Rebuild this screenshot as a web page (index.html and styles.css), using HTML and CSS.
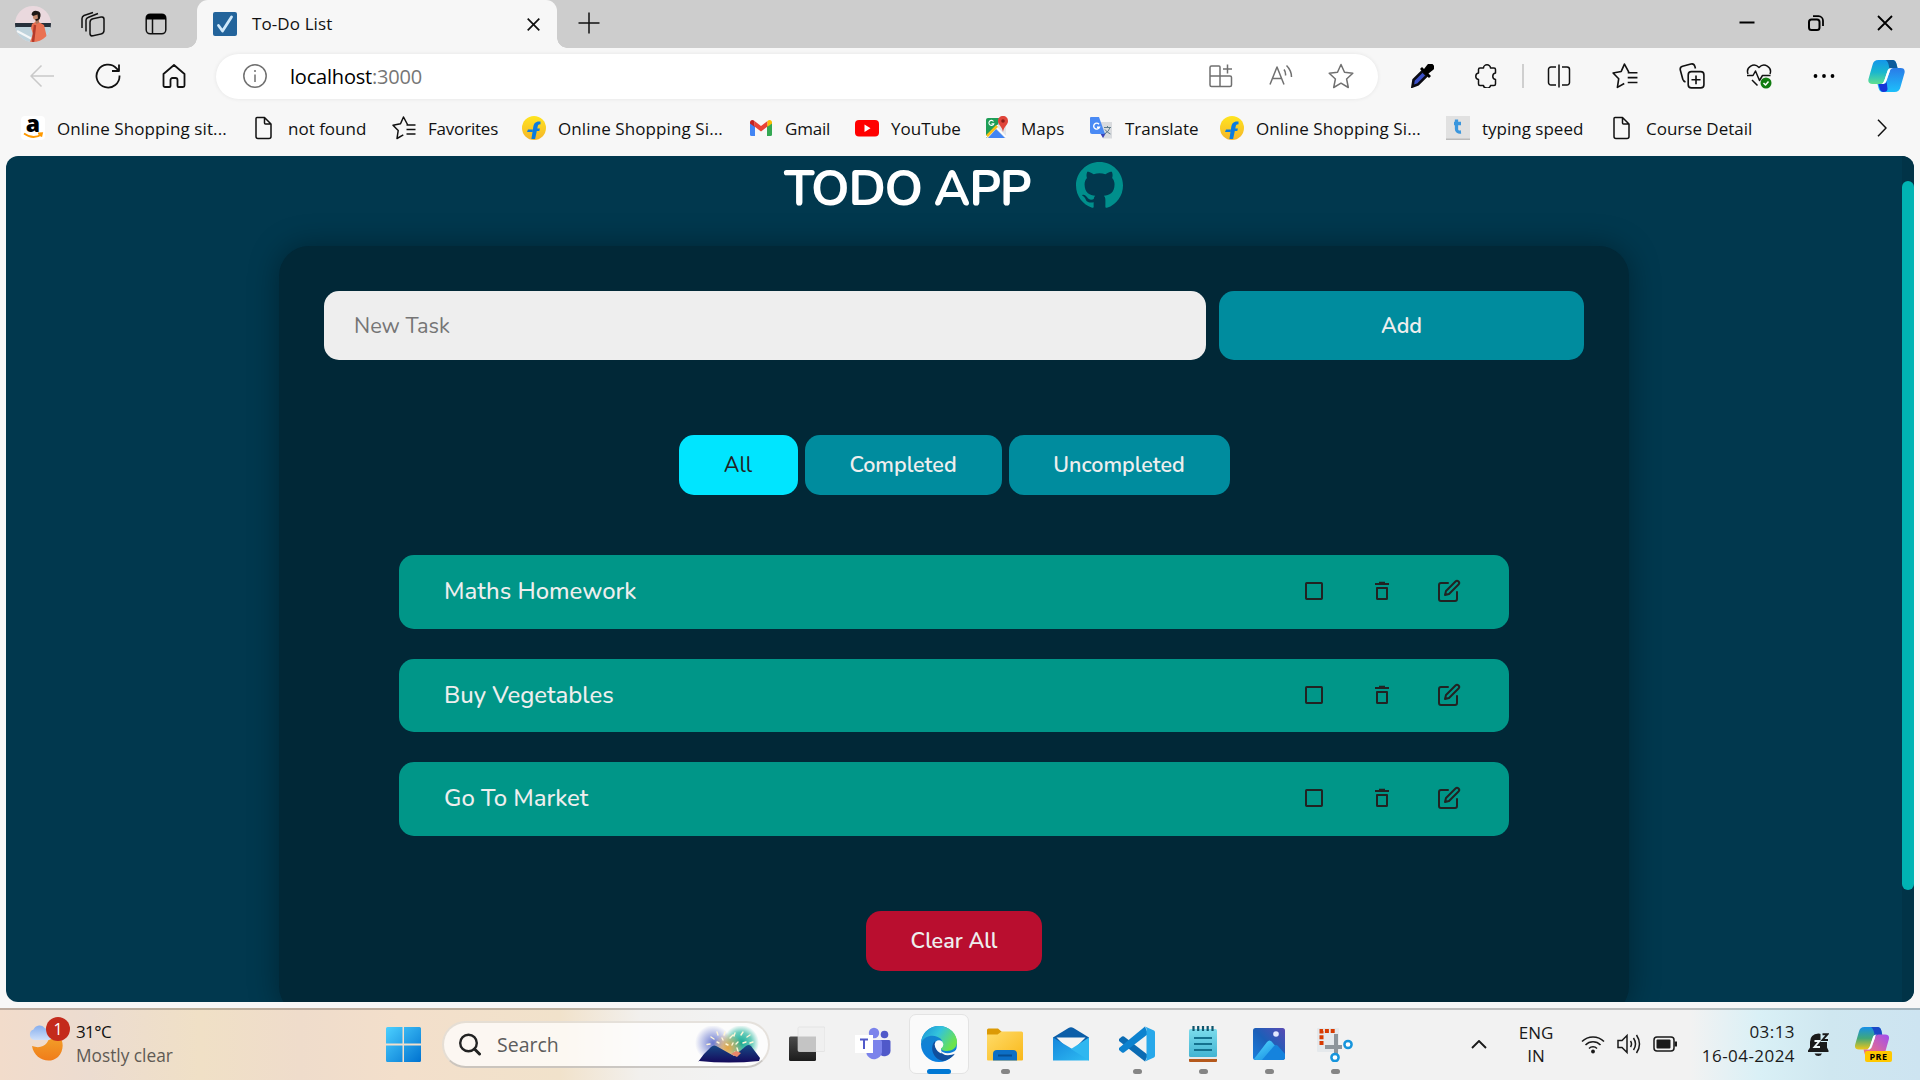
FILE: index.html
```html
<!DOCTYPE html>
<html lang="en">
<head>
<meta charset="utf-8">
<title>To-Do List</title>
<link rel="stylesheet" href="styles.css">
</head>
<body>
<svg class="defs" width="0" height="0" aria-hidden="true">
  <defs>
    <linearGradient id="flame" x1="0" y1="0" x2="0" y2="1"><stop offset="0" stop-color="#ffe51f"/><stop offset="1" stop-color="#f5b52a"/></linearGradient>
    <linearGradient id="moon" x1="0" y1="0" x2="0" y2="1"><stop offset="0" stop-color="#f3a72c"/><stop offset="1" stop-color="#f07c1a"/></linearGradient>
    <linearGradient id="cloud" x1="0" y1="0" x2="0" y2="1"><stop offset="0" stop-color="#86aeee"/><stop offset="1" stop-color="#cfe0fa"/></linearGradient>
    <linearGradient id="win" x1="0" y1="0" x2="1" y2="1"><stop offset="0" stop-color="#4cd0ff"/><stop offset="1" stop-color="#0072d0"/></linearGradient>
    <linearGradient id="cpL" x1="0" y1="0" x2="0" y2="1"><stop offset="0" stop-color="#1496ea"/><stop offset=".5" stop-color="#19b6cf"/><stop offset="1" stop-color="#5fe08f"/></linearGradient>
    <linearGradient id="cpR" x1="0" y1="0" x2="0" y2="1"><stop offset="0" stop-color="#2a7be8"/><stop offset="1" stop-color="#1cc0fb"/></linearGradient>
    <linearGradient id="preL" x1="0" y1="0" x2="0" y2="1"><stop offset="0" stop-color="#168fe8"/><stop offset=".5" stop-color="#41a87a"/><stop offset="1" stop-color="#f0c619"/></linearGradient>
    <linearGradient id="preR" x1="1" y1="0" x2="0" y2="1"><stop offset="0" stop-color="#a04cf0"/><stop offset="1" stop-color="#ff7a68"/></linearGradient>
    <linearGradient id="edgeTop" x1="0" y1="0" x2="1" y2=".5"><stop offset="0" stop-color="#168fd8"/><stop offset=".5" stop-color="#33c3dc"/><stop offset="1" stop-color="#6be34c"/></linearGradient>
    <linearGradient id="edgeLeft" x1="0" y1="0" x2="0" y2="1"><stop offset="0" stop-color="#1784c9"/><stop offset="1" stop-color="#0a7fe0"/></linearGradient>
    <linearGradient id="folder" x1="0" y1="0" x2="1" y2="1"><stop offset="0" stop-color="#ffdc6a"/><stop offset="1" stop-color="#f9b81a"/></linearGradient>
    <linearGradient id="mail" x1="0" y1="0" x2="1" y2="1"><stop offset="0" stop-color="#1586dc"/><stop offset="1" stop-color="#2ebcf2"/></linearGradient>
    <linearGradient id="note" x1="0" y1="0" x2="0" y2="1"><stop offset="0" stop-color="#7bdcec"/><stop offset="1" stop-color="#43b4d2"/></linearGradient>
    <linearGradient id="photo" x1="0" y1="1" x2="1" y2="0"><stop offset="0" stop-color="#1a7fdc"/><stop offset=".5" stop-color="#1b5fb8"/><stop offset="1" stop-color="#5a4bb4"/></linearGradient>
    <linearGradient id="hill" x1="0" y1="0" x2="1" y2="1"><stop offset="0" stop-color="#55dcff"/><stop offset="1" stop-color="#0c7ddc"/></linearGradient>
    <linearGradient id="dark" x1="0" y1="0" x2="0" y2="1"><stop offset="0" stop-color="#4b4b4b"/><stop offset="1" stop-color="#1c1c1c"/></linearGradient>
    <radialGradient id="glowV"><stop offset="0" stop-color="#6a79cf"/><stop offset="1" stop-color="#6a79cf" stop-opacity="0"/></radialGradient>
    <radialGradient id="glowG"><stop offset="0" stop-color="#12a894"/><stop offset=".6" stop-color="#2bb8a0" stop-opacity=".7"/><stop offset="1" stop-color="#2bb8a0" stop-opacity="0"/></radialGradient>
    <radialGradient id="glowO"><stop offset="0" stop-color="#e5a544"/><stop offset="1" stop-color="#e5a544" stop-opacity="0"/></radialGradient>
    <linearGradient id="mount" x1="0" y1="0" x2="0" y2="1"><stop offset="0" stop-color="#174a86"/><stop offset="1" stop-color="#150a5c"/></linearGradient>
    <clipPath id="round"><circle cx="18" cy="18" r="18"/></clipPath>
    <symbol id="page" viewBox="0 0 24 24"><path d="M5 1.500h7.500l6.500 6.500V20.500a2 2 0 0 1-2 2H6a2 2 0 0 1-2-2V2.500a1 1 0 0 1 1-1zM12.500 1.500V7a1 1 0 0 0 1 1H19"/></symbol>
    <symbol id="favlist" viewBox="0 0 24 24"><path d="M15.500 8.500 11.500 1 8.500 7.800 1 9.200l5.200 5.300L5 22.500l6.300-3.600M14.500 9h9M14.500 13.500h9M14.500 18h9"/></symbol>
    <symbol id="flipkart" viewBox="0 0 24 24"><circle cx="12" cy="12" r="12" fill="url(#flame)"/><path d="M18.500 5.500c-5-.6-6.600 2-7.200 5.200L9.400 23h3.700l1.700-8h2.500l.6-2.600h-2.600l.4-2c.2-1.400 1.200-2.200 2.800-2zM6 13.500h5l-.4 2.400H5z" fill="#0a7be0"/></symbol>
    <symbol id="box" viewBox="0 0 24 24"><rect x="4" y="4" width="16" height="16" rx=".7"/></symbol>
    <symbol id="trash" viewBox="0 0 24 24"><path d="M5 5h14M9 3.800h6M7 9h10v10.500a.5.5 0 0 1-.5.500h-9a.5.5 0 0 1-.5-.500z"/></symbol>
    <symbol id="edit" viewBox="0 0 24 24"><path d="M11 4H4a2 2 0 0 0-2 2v14a2 2 0 0 0 2 2h14a2 2 0 0 0 2-2v-7M18.500 2.500a2.121 2.121 0 0 1 3 3L12 15l-4 1 1-4z"/></symbol>
  </defs>
</svg>

<header class="tabstrip">
  <div class="strip-left">
    <svg class="avatar" viewBox="0 0 36 36"><g clip-path="url(#round)"><path fill="#ead9de" d="M0 0h36v36H0z"/><path fill="#27313c" d="M0 17h36v5H0z"/><path fill="#bfd3dc" d="M0 21h36v15H0z"/><path d="M2 25l15 8" stroke="#f4f7f8" stroke-width="2"/><path fill="#ea7253" d="M17 18l5-3 7 4 4 17H15l3-8-2-6z"/><path d="M20 19l-2 17" stroke="#b43b2b" stroke-width="2.500"/><path d="M20 13h4v4l-3 1z" fill="#a9745b"/><circle cx="21.500" cy="10.500" r="3.600" fill="#c38a6e"/><path fill="#1c1714" d="M16.500 8.500q1-4.500 5.500-3.500 4 .500 3.500 5l-.8 3-3 2-1.700-1.500 3-1-.5-4-4.500 1.500z"/></g></svg>
    <svg class="ico i26" viewBox="0 0 26 26"><rect x="10" y="7.500" width="14" height="17" rx="3" transform="skewY(-12) translate(0 3)"/><path d="M6 20.500V9a3 3 0 0 1 2-2.500L18 2.500M2 17V7.500A3.500 3.500 0 0 1 4 4.500L13 1.500"/></svg>
    <svg class="ico i22" viewBox="0 0 22 22"><rect x="1.200" y="1.200" width="19.600" height="19.600" rx="4"/><path fill="#000" stroke="none" d="M1 6.500V4.500A4 4 0 0 1 5 1h12a4 4 0 0 1 4 3.500v2z"/><path d="M7.500 6v14"/></svg>
  </div>
  <div class="tab">
    <svg class="favicon" viewBox="0 0 24 24"><rect width="24" height="24" rx="2" fill="#23649b"/><path d="M5.500 13.500l4 5.500L18.500 5" fill="none" stroke="#cfe9fb" stroke-width="2.800" stroke-linecap="round" stroke-linejoin="round"/></svg>
    <span class="tab-title">To-Do List</span>
    <svg class="ico tab-close" viewBox="0 0 13 13"><path d="M.7.700l11.600 11.600M12.300.7.700 12.300"/></svg>
  </div>
  <svg class="ico plus" viewBox="0 0 22 22"><path d="M11 .5v21M.5 11h21"/></svg>
  <div class="controls">
    <svg class="ico" viewBox="0 0 16 16"><path stroke-width="2" d="M.5 7.500h15"/></svg>
    <svg class="ico" viewBox="0 0 16 16"><rect x="1" y="4.500" width="10.500" height="10.500" rx="2.500" stroke-width="2"/><path d="M5 1.200h5.500a4.500 4.500 0 0 1 4.500 4.500V11" stroke-width="1.800"/></svg>
    <svg class="ico" viewBox="0 0 16 16"><path stroke-width="1.800" d="M1 1l14 14M15 1 1 15"/></svg>
  </div>
</header>

<nav class="toolbar">
  <div class="nav-icons">
    <svg class="ico i24 disabled" viewBox="0 0 24 24"><path d="M24 12H1M11.500 1.500 1 12l10.500 10.500"/></svg>
    <svg class="ico i26 strong" viewBox="0 0 26 26"><path d="M24.500 12.500A11.500 11.500 0 1 1 21.500 5.300L24 8M24 1.500V8h-7"/></svg>
    <svg class="ico i24 strong" viewBox="0 0 24 24"><path d="M1.500 10 12 1l10.500 9v11.500a1.500 1.500 0 0 1-1.500 1.500h-4.500a1 1 0 0 1-1-1V16a2 2 0 0 0-2-2h-3a2 2 0 0 0-2 2v6a1 1 0 0 1-1 1H3a1.500 1.500 0 0 1-1.500-1.500z"/></svg>
  </div>
  <div class="address">
    <svg class="ico i24 muted" viewBox="0 0 24 24"><circle cx="12" cy="12" r="11.200"/><path d="M12 10.500v7.500M12 6v2"/></svg>
    <span class="url">localhost<span class="port">:3000</span></span>
    <div class="address-icons">
      <svg class="ico i24 muted" viewBox="0 0 24 24"><path d="M2.500 2H10a1 1 0 0 1 1 1v19.500H2.500a1.500 1.500 0 0 1-1.500-1.500V3.500A1.500 1.500 0 0 1 2.500 2zM1 12h20a1.500 1.500 0 0 1 1.500 1.500V21a1.500 1.500 0 0 1-1.500 1.500H11M18.500.5v9M14 5h9"/></svg>
      <svg class="ico i24 muted" viewBox="0 0 24 24"><path d="M1 20.500 8 3l7 17.500M3.500 14.500h9M15 5.500a8 8 0 0 1 1.500 6M17.500 1.500q5 5 5 11.500"/></svg>
      <svg class="ico i26 muted" viewBox="0 0 26 26"><path d="M13 1.500l3.500 7.800 8.300 1-6.200 5.700 1.700 8.500-7.300-4.300-7.300 4.300 1.700-8.500L1.200 10.300l8.300-1z"/></svg>
    </div>
  </div>
  <div class="tools">
    <svg class="i24" viewBox="0 0 24 24"><path d="M3.500 16 12.500 7l4.500 4.500L8 20.500l-5.500 2z" fill="#3b50c8" stroke="#0b0b12" stroke-width="2.600"/><path d="M10 5l9 9 2-2-2.500-2.500L23 6a3.800 3.800 0 0 0-5.500-5.500L14 5l-2-2z"/></svg>
    <svg class="ico i24" viewBox="0 0 24 24"><path d="M3.500 5.500A1.500 1.500 0 0 1 5 4h3.500a3.500 3.200 0 0 1 7 0H19a1.500 1.500 0 0 1 1.500 1.500V9a3.300 3.300 0 0 0 0 6.500V20a1.500 1.500 0 0 1-1.500 1.500h-3.500a3.500 2.500 0 0 1-7 0H5A1.500 1.500 0 0 1 3.500 20v-4.500a3.300 3.300 0 0 1 0-6.500z"/></svg>
    <i class="divider"></i>
    <svg class="ico i24" viewBox="0 0 24 24"><path d="M9 3H4a2.500 2.500 0 0 0-2.500 2.500v13A2.500 2.500 0 0 0 4 21h5M15 3h5a2.500 2.500 0 0 1 2.500 2.500v13A2.500 2.500 0 0 1 20 21h-5M12 .5v23"/></svg>
    <svg class="ico i26"><use href="#favlist"/></svg>
    <svg class="ico i26" viewBox="0 0 24 24"><rect x="8.500" y="8" width="14.500" height="15" rx="3"/><path d="M15.700 11.500v8M11.500 15.500h8.400M6 17.500c-1.500-.5-2-1-2.500-2.500L1.200 6.500C.8 4.500 1.500 3.500 3.300 3L11 1c2-.5 3 0 3.600 2l.6 2"/></svg>
    <svg class="ico i26" viewBox="0 0 26 26"><path d="M2 11C-.5 4 8-1 13 4.500 18-1 26.500 4 24 11M1 12.500h6L9.500 8l4 9.500 3-5h8M6 17l5.500 5.500"/><circle cx="20" cy="20" r="5.500" fill="#107c10" stroke="none"/><path d="M17.500 20l2 2 3-3.500" stroke="#fff"/></svg>
    <svg class="i22" viewBox="0 0 22 22"><circle cx="2.500" cy="11" r="1.900"/><circle cx="11" cy="11" r="1.900"/><circle cx="19.500" cy="11" r="1.900"/></svg>
    <svg class="copilot" viewBox="0 0 36 32"><path d="M10 0h14q3 0 4 4l1 4h-6q-3 0-4 3l-3 9q-1 4-4 4H4q-5 0-4-5L4 5q1-5 6-5z" fill="url(#cpL)"/><path d="M17 0h7q3 0 4 4l1 4h-6l-2 1q-1-8-4-9z" fill="#0d5c9c"/><path d="M26 32H14q-3 0-4-4l-1-4h5q3 0 4-3l3-9q1-4 4-4h7q5 0 4 5l-4 14q-1 5-6 5z" fill="url(#cpR)"/><path d="M10 24h5q3 0 3-3l1 8q0 3-4 3-3 0-4-4z" fill="#1634d8"/><path d="M19 11q1-3 4-3-2 1-2 4l-4 10q-1 2-4 2 2-1 3-4z" fill="#fff"/></svg>
  </div>
</nav>

<nav class="bookmarks">
  <a><svg class="amazon" viewBox="0 0 24 24"><rect width="24" height="24" rx="4" fill="#fff"/><text class="glyph" x="12" y="15.500" font-size="23">a</text><path d="M3 17.500q9 6.500 17.500 1M17 17.500l4-.300-.8 3.500" fill="none" stroke="#f90" stroke-width="1.800"/></svg>Online Shopping sit...</a>
  <a><svg class="ico"><use href="#page"/></svg>not found</a>
  <a><svg class="ico"><use href="#favlist"/></svg>Favorites</a>
  <a><svg><use href="#flipkart"/></svg>Online Shopping Si...</a>
  <a><svg viewBox="0 0 24 24"><path fill="#4285f4" d="M1 6l5 4v10H2.500A1.500 1.500 0 0 1 1 18.500z"/><path fill="#34a853" d="M23 6l-5 4v10h3.500a1.500 1.500 0 0 0 1.500-1.500z"/><path fill="#ea4335" d="M5.500 5l6.500 5 6.500-5v5.500L12 15.500l-6.500-5z"/><path fill="#c5221f" d="M1 6.500C1 4 3.500 3.200 5.500 5v5.800L1 7.500z"/><path fill="#fbbc04" d="M23 6.500c0-2.500-2.500-3.300-4.500-1.500v5.800L23 7.500z"/></svg>Gmail</a>
  <a><svg viewBox="0 0 24 24"><rect y="4" width="24" height="16.500" rx="4" fill="#f00"/><path d="M9.500 8.500v7.500l6-3.700z" fill="#fff"/></svg>YouTube</a>
  <a><svg viewBox="0 0 24 24"><path fill="#e4e6e8" d="M1 3h20v19H1z"/><path fill="#1e9e57" d="M3 2h11l-1 8L1 22V4a2 2 0 0 1 2-2z"/><path fill="#4285f4" d="M11 13l9 9H3z"/><path d="M1 21 13 9M11 11l10 10" stroke="#fff" stroke-width="1.600"/><path d="M2 20 12 10" stroke="#fbc116" stroke-width="2.500"/><path fill="#e0453a" d="M18 0c3 0 5 2 5 5 0 4-4 5-5 11-1-6-5-7-5-11 0-3 2-5 5-5z"/><circle cx="18" cy="5" r="1.800" fill="#8c1d18"/><path d="M8.500 5.500a2.500 2.500 0 1 0 .3 2.200H6.500" fill="none" stroke="#fff" stroke-width="1.100"/></svg>Maps</a>
  <a><svg viewBox="0 0 24 24"><path fill="#d9dbde" d="M9 6h14v16.500H14z"/><path fill="#3c44b8" d="M11 17h6l-3 5z"/><path fill="#4a8af4" d="M2 1h8l6 17H3a2 2 0 0 1-2-2V2a1 1 0 0 1 1-1z"/><path d="M10 8.200a3 3 0 1 0 .5 3H8" fill="none" stroke="#fff" stroke-width="1.400"/><path d="M15 11.500h7M18.500 10v1.500M21 11.500q-1 4-5.500 6.500M16 13.500q2 3 5.500 4.500" fill="none" stroke="#607d8b"/></svg>Translate</a>
  <a><svg><use href="#flipkart"/></svg>Online Shopping Si...</a>
  <a><svg viewBox="0 0 24 24"><path fill="#e1e1e1" d="M0 0h24v24H0z"/><path fill="#bbb" d="M0 22.500h24V24H0z"/><path d="M10.500 3.500V13q0 3.500 4.500 3M8 7.500h7" fill="none" stroke="#3a96dd" stroke-width="3.300"/></svg>typing speed</a>
  <a><svg class="ico"><use href="#page"/></svg>Course Detail</a>
  <svg class="ico more" viewBox="0 0 10 18"><path d="M1 .8 9 9l-8 8.200"/></svg>
</nav>

<div class="viewport">
  <main class="page">
    <div class="heading">
      <h1>TODO APP</h1>
      <svg class="github" viewBox="0 0 16 16"><path d="M8 0C3.580 0 0 3.580 0 8c0 3.540 2.290 6.530 5.470 7.590.4.070.550-.170.550-.380 0-.190-.010-.820-.010-1.490-2.010.370-2.530-.490-2.690-.940-.090-.230-.480-.940-.820-1.130-.280-.150-.680-.520-.010-.530.630-.010 1.080.580 1.230.820.720 1.210 1.870.870 2.330.660.070-.520.280-.870.510-1.070-1.780-.200-3.640-.890-3.640-3.950 0-.870.310-1.590.820-2.150-.080-.200-.360-1.020.080-2.120 0 0 .670-.210 2.200.820.640-.180 1.320-.270 2-.270s1.360.090 2 .270c1.530-1.040 2.200-.820 2.200-.820.440 1.100.160 1.920.080 2.120.510.560.820 1.270.820 2.150 0 3.070-1.870 3.750-3.650 3.950.290.250.540.730.540 1.480 0 1.070-.010 1.930-.010 2.200 0 .210.150.460.550.380A8.010 8.010 0 0 0 16 8c0-4.420-3.580-8-8-8z"/></svg>
    </div>
    <section class="app">
      <form class="new-task">
        <input type="text" placeholder="New Task">
        <button type="button">Add</button>
      </form>
      <div class="filters">
        <button class="all active">All</button>
        <button class="done">Completed</button>
        <button class="open">Uncompleted</button>
      </div>
      <ul class="tasks">
        <li><span>Maths Homework</span><svg><use href="#box"/></svg><svg><use href="#trash"/></svg><svg class="edit"><use href="#edit"/></svg></li>
        <li><span>Buy Vegetables</span><svg><use href="#box"/></svg><svg><use href="#trash"/></svg><svg class="edit"><use href="#edit"/></svg></li>
        <li><span>Go To Market</span><svg><use href="#box"/></svg><svg><use href="#trash"/></svg><svg class="edit"><use href="#edit"/></svg></li>
      </ul>
      <button class="clear">Clear All</button>
    </section>
  </main>
  <div class="scrollbar"><div class="thumb"></div></div>
</div>

<footer class="taskbar">
  <div class="weather">
    <div class="weather-icon">
      <svg viewBox="0 0 36 42"><path d="M4 27C15 31 22 24 22 13c14 1 16 17 8 25-9 8-24 2-26-11z" fill="url(#moon)"/><path d="M6 21a5.500 5.500 0 0 1-.5-10.500 6.500 6.500 0 0 1 11.500-1A6 6 0 0 1 21 21z" fill="url(#cloud)"/></svg>
      <span class="badge">1</span>
    </div>
    <div><div class="temp">31°C</div><div class="cond">Mostly clear</div></div>
  </div>
  <svg class="start" viewBox="0 0 35 35"><path fill="url(#win)" d="M1.500 0H16.500V16.500H0V1.500A1.500 1.500 0 0 1 1.500 0zM18 0h15.500A1.500 1.500 0 0 1 35 1.500v15H18zM0 18.500h16.500V35h-15A1.500 1.500 0 0 1 0 33.500zM18 18.500h17v15a1.500 1.500 0 0 1-1.500 1.500H18z"/></svg>
  <div class="search">
    <svg class="lens" viewBox="0 0 22 22"><circle cx="9.500" cy="9.500" r="8.300"/><path d="M15.500 15.500l5 5" stroke-linecap="round" stroke-width="3"/></svg>
    <span>Search</span>
    <svg class="fireworks" viewBox="0 0 66 37"><circle cx="18" cy="17" r="18" fill="url(#glowV)"/><circle cx="46" cy="17" r="18" fill="url(#glowG)"/><circle cx="33" cy="22" r="15" fill="url(#glowO)"/><g stroke="#fff6d8" stroke-width="1.400" stroke-linecap="round"><path d="M19 13l-3-2M23 9l-1-3M29 9l1-3M15 18l-3 .5M17 23l-3 1.500M35 12l3-3M39 10l1-3M46 9l2-3M52 11l3-2M55 17l3-1M54 22l3 1M43 16l-2 2M38 17l-1 2M42 22l1 3M48 17l3-1M33 19l-2-1M49 23l2 2M40 26l0 3M24 17l-2-1M28 14l-1-2"/></g><path d="M3 36q5-8 13-15 3-3 7 0l16 9 12-10q3-2 5 0l9 12-1 3q-30 3-60 0z" fill="url(#mount)"/><path d="M36 28l5-3 5 2-4 4z" fill="#e8876a"/></svg>
  </div>
  <div class="apps">
    <div class="slot"><svg viewBox="0 0 36 36"><rect y="10.500" width="27" height="24.500" rx="1.500" fill="url(#dark)"/><rect x="9" y="1" width="27" height="24.500" rx="1.500" fill="#f0f0f0" stroke="#dcdcdc" stroke-width=".6"/><path d="M9 10.500h18v15H10.500A1.500 1.500 0 0 1 9 24z" fill="#c4c4c4"/></svg></div>
    <div class="slot"><svg viewBox="0 0 36 36"><circle cx="29.500" cy="8.500" r="3.800" fill="#5059c9"/><circle cx="19" cy="7" r="5.200" fill="#7b83eb"/><path fill="#5059c9" d="M24 14h10a1.500 1.500 0 0 1 1.500 1.500v8a6 6 0 0 1-11.500 3z"/><path fill="#7b83eb" d="M12 14h13.500a1.500 1.500 0 0 1 1.500 1.500V26a8 8 0 0 1-15.500 2z"/><rect y="9" width="18" height="18" fill="#fff"/><path d="M5 13.500h8M9 13.500V23" stroke="#5059c9" stroke-width="2"/></svg></div>
    <div class="slot current"><svg viewBox="0 0 36 36"><circle cx="18" cy="18" r="18" fill="url(#edgeLeft)"/><path fill="url(#edgeTop)" d="M0 17C1 6 9 0 18 0c11 0 18 8 18 16 0 6-5 9-10 9-4 0-7-1.500-6-4 2-2 2-5 0-8C15 8 4 8 0 17z"/><path fill="#104f9d" d="M14 15c-6 6-2 18 8 20 6-1 11-5 12-8-8 4-19 0-20-12z"/><path d="M18.500 23.500c4 5 12 5 17 0L40 26 35 27.500q-13 5-16.500-4z" fill="#fafafa"/><circle cx="18" cy="18.500" r="4.300" fill="#fafafa"/><path d="M14 20c.5 3 3 6.500 6.500 7.500L20 22z" fill="#fafafa"/></svg><i></i></div>
    <div class="slot run"><svg viewBox="0 0 36 36"><path fill="#dc9a05" d="M0 4a1.500 1.500 0 0 1 1.500-1.500H11L15 6l-3 3H0z"/><path fill="url(#folder)" d="M0 8.500h10.500l4-3H34.500A1.500 1.500 0 0 1 36 7v26.500a1 1 0 0 1-1 1H1a1 1 0 0 1-1-1z"/><path fill="#0c6fc6" d="M6 34.500V28a4 4 0 0 1 4-4h16a4 4 0 0 1 4 4v6.500z"/><path d="M11 29.500h14" stroke="#064e92" stroke-width="2"/></svg><i></i></div>
    <div class="slot"><svg viewBox="0 0 36 36"><path fill="#0b5ea8" d="M0 11.500 15.500 2q2.500-1.500 5 0L36 11.500V20H0z"/><path fill="#f4f4f4" d="M3.500 11.500h29L20 24h-4z"/><path fill="url(#mail)" d="M0 11.500l36 21.500v1.500H0z"/><path fill="#2fb7f0" d="M36 11.500 18 23l18 11.500z"/></svg></div>
    <div class="slot run"><svg viewBox="0 0 36 36"><path fill="#0b6bb3" d="M0 13l3-2.500q1-.5 2 0L29 29l-3 6.500L0 15q-1-1 0-2z"/><path fill="#0d82cf" d="M0 24l3 2.500q1 .5 2 0L29 8l-3-7.500L0 22q-1 1 0 2z"/><path fill="#28a8ea" d="M26 .5l9 4q1 .5 1 2v23q0 1.500-1 2l-9 4q1.500-1 1.500-3V3.500q0-2-1.500-3z"/></svg><i></i></div>
    <div class="slot run"><svg viewBox="0 0 36 36"><path fill="#b5591c" d="M4 32h28v3a1 1 0 0 1-1 1H5a1 1 0 0 1-1-1z"/><path fill="#e8e8e8" d="M4 29h28v4H4z"/><rect x="4" y="3" width="28" height="28" rx="1.500" fill="url(#note)"/><path d="M9 12h18M9 18h18M9 24h18" stroke="#14718e" stroke-width="1.800"/><path d="M8.500 0v5M13.200 0v5M18 0v5M22.700 0v5M27.500 0v5" stroke="#0f566e" stroke-width="2.200"/></svg><i></i></div>
    <div class="slot run"><svg viewBox="0 0 36 36"><rect x="2" y="2" width="32" height="32" rx="2.500" fill="url(#photo)"/><path fill="url(#hill)" d="M3 33 16 16q2.500-3 5 0l12 14v3l-2 1H5z"/><path fill="#1583dd" d="M11 34l12-14q2-2 4 0l7 8v4.500L32 34z"/><circle cx="25" cy="8" r="2.800" fill="#e3e8ff"/></svg><i></i></div>
    <div class="slot run"><svg viewBox="0 0 36 36"><rect y="2" width="22" height="24" rx="1" fill="#e5e9ec"/><path d="M19 8v20M8 21h17" stroke="#8d959b" stroke-width="4"/><path d="M4.500 19V5H19" fill="none" stroke="#d83b01" stroke-width="4" stroke-dasharray="4 1.800"/><circle cx="31" cy="18.500" r="3.600" fill="#fff" stroke="#1795dc" stroke-width="2.500"/><circle cx="18" cy="31.500" r="3.600" fill="#fff" stroke="#1795dc" stroke-width="2.500"/></svg><i></i></div>
  </div>
  <div class="tray">
    <svg class="chev" viewBox="0 0 16 9"><path d="M1 8l7-7 7 7"/></svg>
    <div class="lang">ENG<br>IN</div>
    <svg class="status" viewBox="0 0 24 24"><path d="M1 9.500a15.500 15.500 0 0 1 22 0M4.500 13a10.500 10.500 0 0 1 15 0M8 16.500a5.700 5.700 0 0 1 8 0"/><circle cx="12" cy="19.500" r="1.900" fill="#1a1a1a" stroke="none"/></svg>
    <svg class="status" viewBox="0 0 24 24"><path d="M1 8.500h4l5-5v17l-5-5H1zM13.500 9q2 3 0 6M16.500 6q4 6 0 12M19.500 3q6 9 0 18"/></svg>
    <svg class="status" viewBox="0 0 24 24"><rect x="1" y="5" width="20" height="14" rx="3"/><rect x="3.500" y="7.500" width="14" height="9" rx="1" fill="#1a1a1a" stroke="none"/><path d="M22.800 9.500v5" stroke-width="2.400"/></svg>
    <div class="clock">03:13<br>16-04-2024</div>
    <svg class="bell" viewBox="0 0 21 23"><path fill="#1a1a1a" d="M0 17.500l2-3V9q0-8 8.500-8.500Q19 1 19 9v5.500l1.500 3V19H0zM6.500 20.500h7.500q-1 2.500-3.700 2.500t-3.800-2.500z"/><path fill="#d3edf4" d="M12.500 0H21v9h-8.500z"/><path d="M6.500 8h5l-5 6h5.500" fill="none" stroke="#eef6f8" stroke-width="1.900"/><path d="M14.500 1.200h5l-5 5.800h5.500" fill="none" stroke="#1a1a1a" stroke-width="1.900"/></svg>
    <div class="pre"><svg viewBox="0 0 36 32"><path d="M10 0h14q3 0 4 4l1 4h-6q-3 0-4 3l-3 9q-1 4-4 4H4q-5 0-4-5L4 5q1-5 6-5z" fill="url(#preL)"/><path d="M17 0h7q3 0 4 4l1 5-8 1q-1-8-4-10z" fill="#1b48c8"/><path d="M26 32H14q-3 0-4-4l-1-4h5q3 0 4-3l3-9q1-4 4-4h7q5 0 4 5l-4 14q-1 5-6 5z" fill="url(#preR)"/><path d="M19 11q1-3 4-3-2 1-2 4l-4 10q-1 2-4 2 2-1 3-4z" fill="#fff"/></svg><span>PRE</span></div>
  </div>
</footer>
</body>
</html>
```
FILE: styles.css
```css
* { box-sizing: border-box; }
body {
  margin: 0; width: 1920px; height: 1080px; overflow: hidden;
  display: flex; flex-direction: column; background: #f7f7f7; color: #111;
  font-family: "Segoe UI", "Open Sans", "Noto Sans", sans-serif; font-size: 17px;
}
svg { display: block; flex: none; }
button, input { font: inherit; border: 0; padding: 0; margin: 0; }
.defs { position: absolute; }
.ico { fill: none; stroke: #111; stroke-width: 1.5; stroke-linejoin: round; }
.i22 { width: 22px; height: 22px; }
.i24 { width: 24px; height: 24px; }
.i26 { width: 26px; height: 26px; }
.muted { stroke: #707070; }
.disabled { stroke: #c9c9c9; }
.strong { stroke-width: 1.8; }
.glyph { font-weight: 800; text-anchor: middle; fill: #000; letter-spacing: 0; }
.amazon { overflow: visible; }

/* tab strip */
.tabstrip { flex: none; height: 48px; background: #cdcdcd; display: flex; align-items: center; }
.strip-left { width: 197px; padding-left: 15px; display: flex; align-items: center; }
.avatar { width: 36px; height: 36px; }
.strip-left .i26 { margin-left: 29px; }
.strip-left .i22 { margin-left: 39px; }
.tab {
  position: relative; width: 360px; height: 48px; background: #f7f7f7; border-radius: 11px 11px 0 0;
  display: flex; align-items: center; padding: 0 17px 0 16px;
}
.tab::before, .tab::after { content: ""; position: absolute; bottom: 0; width: 10px; height: 10px; }
.tab::before { left: -10px; background: radial-gradient(circle at 0 0, transparent 9.5px, #f7f7f7 10px); }
.tab::after { right: -10px; background: radial-gradient(circle at 100% 0, transparent 9.5px, #f7f7f7 10px); }
.favicon { width: 24px; height: 24px; }
.tab-title { margin-left: 15px; padding-bottom: 2px; flex: 1; letter-spacing: .1px; }
.tab-close { width: 13px; height: 13px; stroke-width: 1.7; }
.plus { width: 22px; height: 22px; margin-left: 21px; margin-bottom: 2px; }
.controls { margin-left: auto; padding-right: 27px; padding-bottom: 2px; display: flex; gap: 53px; }
.controls svg { width: 16px; height: 16px; stroke: #000; }

/* toolbar */
.toolbar { flex: none; height: 57px; padding-top: 6px; display: flex; align-items: flex-start; }
.nav-icons { width: 216px; height: 44px; padding-left: 30px; display: flex; align-items: center; gap: 41px; }
.address {
  width: 1162px; height: 45px; border-radius: 23px; background: #fff; padding: 0 24px 1px 27px;
  display: flex; align-items: center; box-shadow: 0 0 4px rgba(0, 0, 0, .08);
}
.url { margin-left: 23px; font-size: 20px; letter-spacing: -.2px; color: #000; }
.port { color: #767676; }
.address-icons { margin-left: auto; display: flex; align-items: center; gap: 35.500px; }
.tools { flex: 1; height: 44px; padding-left: 32px; display: flex; align-items: center; gap: 41px; }
.divider { width: 2px; height: 24px; background: #cfcfcf; margin: 0 -18px; }
.copilot { width: 37px; height: 32px; margin-left: -8px; }

/* bookmarks */
.bookmarks {
  flex: none; height: 51px; padding: 0 0 5px 21px; display: grid; align-items: center;
  grid-template-columns: 231px 140px 130px 227px 106px 130px 104px 131px 226px 164px 267px 10px;
}
.bookmarks a { display: flex; align-items: center; gap: 12px; white-space: nowrap; height: 46px; }
.bookmarks a svg { width: 24px; height: 24px; }
.bookmarks a:nth-child(1), .bookmarks a:nth-child(4), .bookmarks a:nth-child(9) { letter-spacing: .1px; }
.bookmarks a:nth-child(3), .bookmarks a:nth-child(5) { letter-spacing: -.2px; }
.more { width: 10px; height: 18px; }

/* page */
.viewport {
  flex: none; width: 1908px; height: 846px; margin-left: 6px; border-radius: 12px; overflow: hidden;
  background: #01384e; display: flex;
}
.page {
  width: 1896px; font-family: Nunito, "Open Sans", sans-serif; color: #eee;
  display: flex; flex-direction: column; align-items: center;
}
.heading { flex: none; height: 90px; padding-top: 6px; display: flex; gap: 44px; margin-right: 43px; align-items: flex-start; }
h1 { margin: 0; margin-left: 42px; width: 248px; font-size: 49px; line-height: 54px; font-weight: 700; letter-spacing: -1.200px; white-space: nowrap; color: #fff; }
.github { width: 47px; height: 47px; fill: #008f8c; }
.app {
  flex: none; width: 1350px; height: 770px; padding: 45px; border-radius: 30px; background: #012837;
  box-shadow: 0 0 30px rgba(0, 0, 0, .35);
  display: flex; flex-direction: column; align-items: center;
}
.new-task { width: 100%; height: 69px; display: flex; gap: 13px; }
.new-task input { width: 882px; border-radius: 15px; background: #eee; padding: 0 30px; font-size: 21.800px; }
.new-task input::placeholder { color: #757575; opacity: 1; }
.new-task button { flex: 1; }
button { border-radius: 15px; background: #008c9e; color: #eee; font-size: 21.500px; font-weight: 600; }
.filters { margin-top: 75px; height: 60px; display: flex; gap: 7px; }
.all { width: 119px; }
.done { width: 197px; }
.open { width: 221px; }
.filters .active { background: #00e5ff; color: #222; font-weight: 400; }
.tasks { list-style: none; width: 1110px; margin: 60px 0 0; padding: 0; display: grid; gap: 30px; }
.tasks li {
  height: 73.500px; padding: 0 48px 1px 45px; border-radius: 15px; background: #009688;
  display: flex; align-items: center; gap: 43.500px; font-size: 23.900px; font-weight: 500;
}
.tasks span { flex: 1; }
.tasks svg { width: 24px; height: 24px; fill: none; stroke: #222; stroke-width: 2; stroke-linejoin: round; stroke-linecap: butt; }
.tasks .edit { stroke-linecap: round; }
.clear { flex: none; width: 176px; height: 60px; margin-top: 75px; background: #b90e2f; }
.scrollbar { width: 12px; padding-top: 25px; background: #013347; }
.thumb { height: 709px; border-radius: 6px; background: #00b3b3; }

/* taskbar */
.taskbar {
  flex: none; height: 72px; margin-top: 6px; padding-bottom: 2px; border-top: 2px solid rgba(0, 0, 0, .22); display: flex; align-items: center;
  background: linear-gradient(90deg, #f2dccb 0, #ecdcd0 90px, #f0e0c6 200px, #efdccb 300px, #f3dfcb 400px, #f1e2cb 560px, #f2f0ed 640px, #f2f2f2 720px, #f2f2f2 1690px, #d9f0f6 1760px, #cfe7f0 1830px, #cde4f1 1920px);
}
.weather { width: 386px; padding-left: 28px; display: flex; gap: 12px; line-height: 24px; }
.weather-icon { position: relative; width: 36px; }
.weather-icon svg { width: 36px; height: 42px; margin-top: -1px; }
.badge {
  position: absolute; left: 18px; top: -3px; width: 24px; height: 24px; border-radius: 50%;
  background: #c42b1c; color: #fff; font-size: 16px; text-align: center; line-height: 24px;
}
.temp { color: #111; letter-spacing: -.6px; }
.cond { color: #5f5a54; font-size: 17.300px; }
.start { width: 35px; height: 35px; }
.search {
  width: 328px; height: 47px; margin-left: 21px; border-radius: 24px; border: 2px solid rgba(120, 100, 70, .17); border-bottom-color: rgba(90, 80, 70, .3);
  background: rgba(255, 255, 255, .74); display: flex; align-items: center; padding: 0 7px 0 15px; font-size: 19.500px; color: #5c5c5c;
}
.lens { width: 22px; height: 23px; fill: none; stroke: #222; stroke-width: 2.400; }
.search span { margin-left: 16px; flex: 1; }
.fireworks { width: 66px; height: 37px; }
.apps { margin-left: 4px; display: flex; }
.slot { position: relative; width: 66px; height: 60px; display: grid; place-items: center; }
.slot svg { width: 36px; height: 36px; }
.slot i { position: absolute; left: 28.500px; bottom: 0; width: 9px; height: 5px; border-radius: 3px; background: #858585; }
.current::before { content: ""; position: absolute; inset: 0 3px; border: 1.500px solid #e3e3e3; border-radius: 7px; background: #fafafa; }
.current svg { position: relative; }
.slot.current i { left: 21px; width: 24px; background: #0078d4; }
.tray { margin-left: auto; display: flex; align-items: center; color: #1a1a1a; padding-right: 29px; }
.tray svg { stroke: #1a1a1a; fill: none; stroke-width: 1.500; }
.tray .chev { width: 16px; height: 9px; stroke-width: 1.900; }
.lang { width: 60px; margin-left: 19px; text-align: center; line-height: 23px; }
.status { width: 24px; height: 24px; margin-left: 12px; }
.lang + .status { margin-left: 15px; }
.clock { width: 118px; text-align: right; line-height: 24px; letter-spacing: .45px; }
.tray .bell { width: 21px; height: 23px; margin-left: 13px; stroke: none; }
.pre { position: relative; width: 36px; height: 35px; margin-left: 26px; }
.tray .pre svg { width: 34px; height: 30px; stroke: none; }
.pre span {
  position: absolute; right: -1px; bottom: 0; height: 11px; width: 27px; border-radius: 2px; background: #ffc800;
  color: #000; font-size: 9px; font-weight: 700; line-height: 11px; text-align: center; letter-spacing: .5px;
}
```
